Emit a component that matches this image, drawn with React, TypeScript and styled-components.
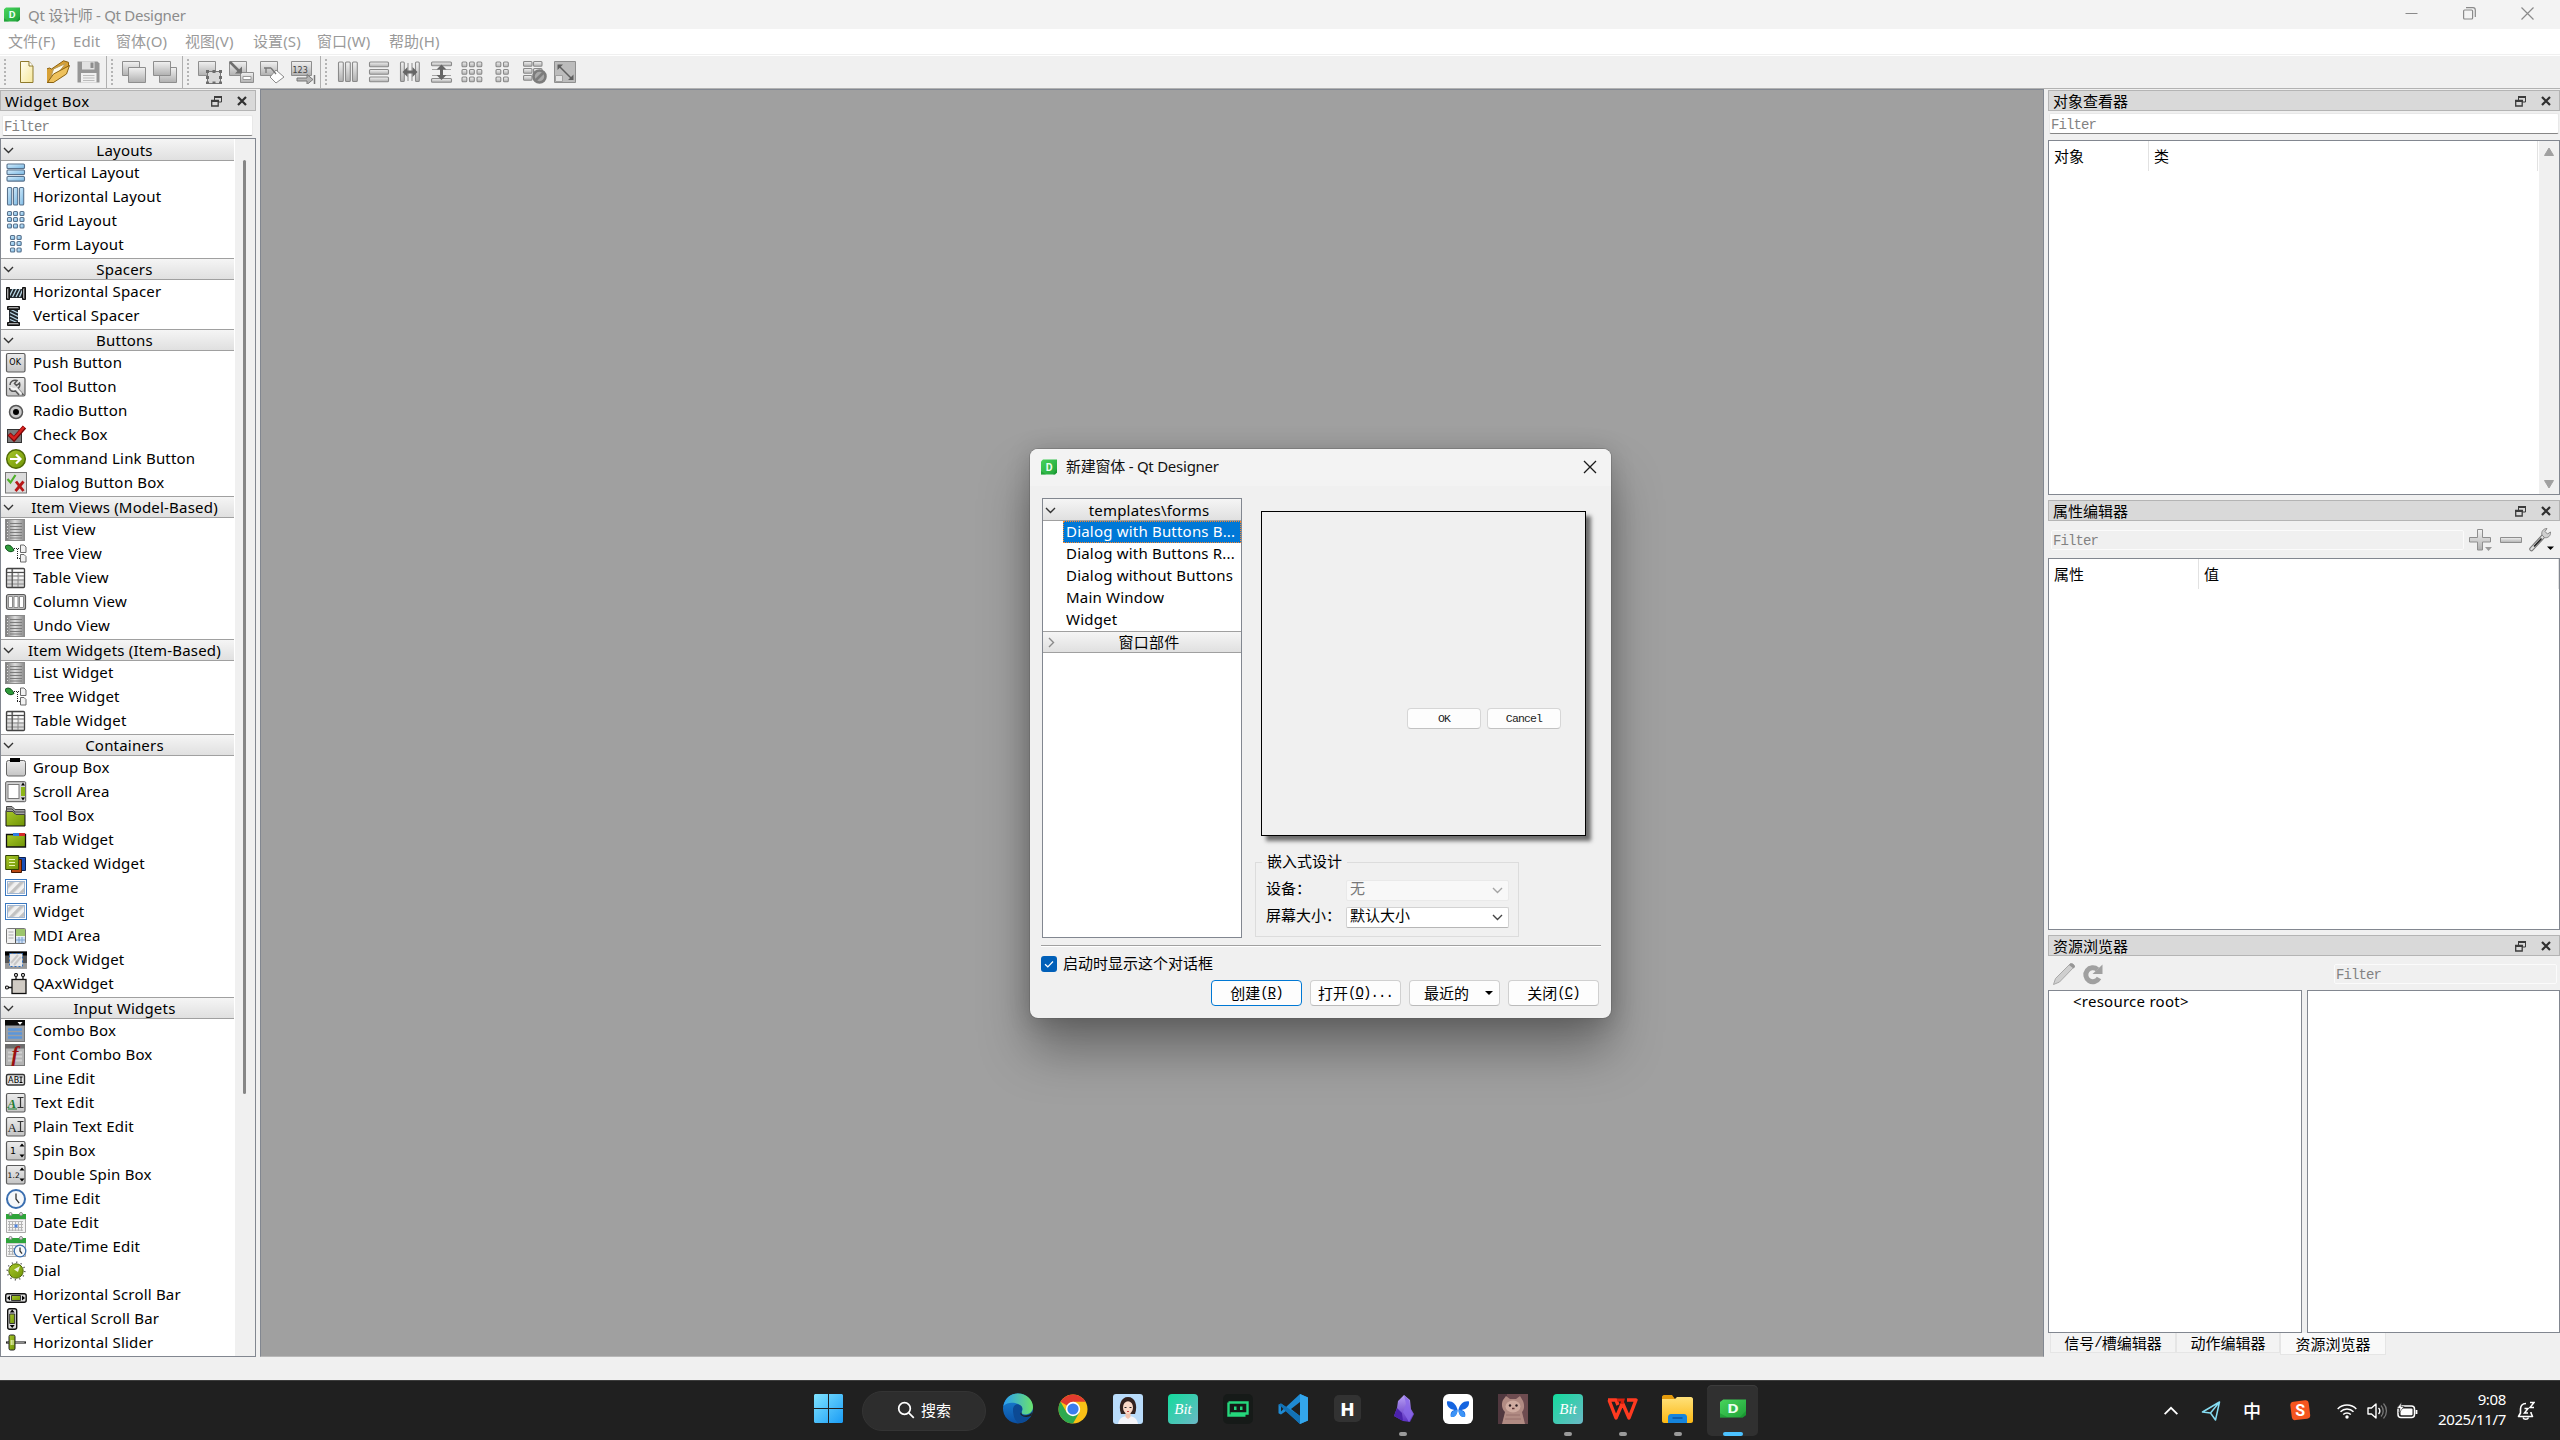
import React from "react";
import styled, { createGlobalStyle, css } from "styled-components";

const UI = `"Noto Sans", "Noto Sans CJK SC", sans-serif`;
const SONG = `"Liberation Mono", "Noto Sans CJK SC", monospace`;

const Global = createGlobalStyle`
  * { box-sizing: border-box; }
  html, body { margin: 0; padding: 0; overflow: hidden; }
  body { font-family: ${UI}; font-size: 15px; color: #000; background: #f0f0f0; }
  svg { display: block; flex: none; }
`;

/* ---------- window frame ---------- */

const Desktop = styled.div`
  position: relative;
  width: 2560px;
  height: 1440px;
  display: flex;
  flex-direction: column;
  overflow: hidden;
  background: #f0f0f0;
  white-space: nowrap;
`;

const TitleBar = styled.header`
  height: 29px;
  flex: none;
  display: flex;
  align-items: center;
  justify-content: space-between;
  padding: 0 26px 1px 4px;
  background: #f3f3f3;
  color: #8c8c8c;
`;

const TitleText = styled.div<{ $dark?: boolean }>`
  display: flex;
  align-items: center;
  gap: ${(p) => (p.$dark ? 9 : 8)}px;
  letter-spacing: ${(p) => (p.$dark ? -0.25 : -0.28)}px;
  color: ${(p) => (p.$dark ? "#111" : "#8c8c8c")};
`;

const Raised = styled.span`
  padding-bottom: 2px;
`;

const WindowButtons = styled.div`
  display: flex;
  align-items: center;
  gap: 45px;
  padding-bottom: 1px;
  color: #8a8a8a;
`;

const MenuBar = styled.nav`
  height: 27px;
  flex: none;
  background: #fff;
  border-bottom: 1px solid #fff;
  box-shadow: inset 0 -1px #f0f0f0;
  display: flex;
  align-items: center;
  padding: 0 0 3px 8px;
  color: #9a9a9a;
`;

const MenuItem = styled.span<{ $w: number }>`
  width: ${(p) => p.$w}px;
  letter-spacing: 0.1px;
`;

const ToolBarRow = styled.div`
  height: 33px;
  flex: none;
  display: flex;
  align-items: center;
  border-bottom: 1px solid #b2b2b2;
`;

const ToolGroup = styled.div<{ $w: number; $lead: number }>`
  width: ${(p) => p.$w}px;
  height: 32px;
  display: flex;
  align-items: center;
  padding-left: 4px;
  border-right: 1px solid #b0b0b0;
  &:last-child { border-right: 0; }
  > i { margin-right: ${(p) => p.$lead}px; }
`;

const Grip = styled.i`
  width: 2px;
  height: 26px;
  background: repeating-linear-gradient(#b4b4b4 0 2px, transparent 2px 4px);
`;

const ToolButton = styled.span`
  width: 31px;
  height: 24px;
  display: flex;
  padding-left: 2px;
`;

const Main = styled.main`
  height: 1268px;
  flex: none;
  display: flex;
  align-items: stretch;
`;

const MdiArea = styled.section`
  flex: 1;
  margin: 0 4px;
  background: #a0a0a0;
  border: 1px solid #828790;
  border-bottom-color: #b8b8b8;
`;

const StatusBar = styled.footer`
  height: 23px;
  flex: none;
`;

/* ---------- docks ---------- */

const Dock = styled.aside<{ $w: number }>`
  width: ${(p) => p.$w}px;
  flex: none;
  display: flex;
  flex-direction: column;
  padding-top: 1px;
`;

const DockTitleBar = styled.div<{ $right?: boolean }>`
  height: 21px;
  flex: none;
  display: flex;
  align-items: center;
  justify-content: space-between;
  padding: 0 8px 0 4px;
  background: #d9d9d9;
  border: 1px solid #b4b4b4;
  letter-spacing: 0.4px;
  ${(p) => p.$right && css`letter-spacing: 0;`}
`;

const DockButtons = styled.span<{ $gap: number }>`
  display: flex;
  align-items: center;
  gap: ${(p) => p.$gap}px;
`;

const Latin = styled.span`
  font-family: ${SONG};
  font-size: 14px;
  letter-spacing: -0.9px;
`;

const FilterBox = styled.div<{ $m: string; $h?: number; $off?: boolean; $w?: number }>`
  height: ${(p) => p.$h ?? 21}px;
  ${(p) => p.$w && css`width: ${p.$w}px;`}
  flex: none;
  margin: ${(p) => p.$m};
  padding: 2px 0 0 1px;
  display: flex;
  align-items: center;
  color: #828282;
  background: ${(p) => (p.$off ? "#f0f0f0" : "#fff")};
  border: 1px solid ${(p) => (p.$off ? "#fbfbfb" : "#e8e8e8")};
  ${(p) => !p.$off && css`border-bottom-color: #868686;`}
  border-radius: 2px;
`;

const Frame = styled.div<{ $h?: number; $w?: number }>`
  ${(p) => (p.$h ? css`height: ${p.$h}px;` : css`flex: 1;`)}
  ${(p) => p.$w && css`width: ${p.$w}px; flex: none;`}
  display: flex;
  background: #fff;
  border: 1px solid #828790;
  overflow: hidden;
`;

const Categories = styled.div`
  width: 233px;
  flex: none;
`;

const Category = styled.div<{ $first?: boolean; $flush?: boolean }>`
  height: 22px;
  margin-top: ${(p) => (p.$first || p.$flush ? 0 : 1)}px;
  border-bottom: 1px solid #a0a0a0;
  border-top: ${(p) => (p.$first ? "0" : "1px solid #a0a0a0")};
  padding-top: ${(p) => (p.$first ? 2 : 0)}px;
  background: linear-gradient(#f5f5f5, #e0e0e0);
  display: grid;
  grid-template-columns: 13px 1fr;
  align-items: center;
  padding-left: 2px;
  text-align: center;
  letter-spacing: 0.2px;
  line-height: 19px;
`;

const CategoryName = styled.span`
  padding-right: 1px;
`;

const WidgetRow = styled.div`
  height: 24px;
  display: flex;
  align-items: center;
  gap: 6px;
  padding-left: 4px;
  line-height: 22px;
  letter-spacing: 0.2px;
`;

const ThumbTrack = styled.div`
  flex: 1;
  background: #f0f0f0;
  margin-left: 1px;
  padding: 21px 0 0 8px;
`;

const Thumb = styled.div`
  width: 3px;
  height: 934px;
  border-radius: 2px;
  background: #868686;
`;

const HeaderRow = styled.div`
  flex: 1;
  height: 30px;
  display: flex;
  align-items: center;
`;

const HeaderCell = styled.div<{ $w: number }>`
  width: ${(p) => p.$w}px;
  height: 30px;
  line-height: 31px;
  padding-left: 5px;
  border-right: 1px solid #e2e2e2;
`;

const ArrowTrack = styled.div`
  width: 20px;
  display: flex;
  flex-direction: column;
  align-items: center;
  justify-content: space-between;
  padding: 7px 0 6px;
  background: #f0f0f0;
`;

const PropertyTools = styled.div`
  height: 37px;
  display: flex;
  align-items: center;
  padding: 0 0 0 3px;
`;

const ResourceTools = styled.div`
  height: 34px;
  display: flex;
  align-items: center;
  padding: 2px 0 0 4px;
`;

const Gap = styled.i<{ $s: number }>`
  flex: none;
  width: ${(p) => p.$s}px;
  height: ${(p) => p.$s}px;
`;

const Panes = styled.div`
  height: 343px;
  display: flex;
  gap: 5px;
`;

const RootItem = styled.span`
  padding: 0 0 0 24px;
  line-height: 20px;
  letter-spacing: 0.25px;
`;

const TabStrip = styled.div`
  display: flex;
  align-items: flex-start;
  padding-left: 2px;
  font: 400 15px ${SONG};
`;

const Tab = styled.div<{ $w: number; $on?: boolean }>`
  width: ${(p) => p.$w}px;
  height: ${(p) => (p.$on ? 22 : 20)}px;
  display: flex;
  align-items: center;
  justify-content: center;
  background: ${(p) => (p.$on ? "#f9f9f9" : "#f3f3f3")};
  border: 1px solid #e5e5e5;
  border-top: 0;
`;

/* ---------- new form dialog ---------- */

const Dialog = styled.section`
  position: absolute;
  left: 1030px;
  top: 449px;
  width: 581px;
  height: 569px;
  border-radius: 8px;
  background: #f0f0f0;
  box-shadow: 0 0 0 1px rgba(90, 90, 90, 0.35), 0 32px 50px rgba(0, 0, 0, 0.34), 0 3px 24px rgba(0, 0, 0, 0.18);
  display: flex;
  flex-direction: column;
`;

const DialogTitle = styled.header`
  height: 37px;
  flex: none;
  display: flex;
  align-items: center;
  justify-content: space-between;
  padding: 0 14px 2px 11px;
  border-radius: 8px 8px 0 0;
  background: #f3f3f3;
`;

const DialogTop = styled.div`
  height: 459px;
  flex: none;
  display: flex;
  gap: 13px;
  padding: 12px 12px 0;
`;

const TemplateList = styled.div`
  width: 200px;
  height: 440px;
  background: #fff;
  border: 1px solid #828790;
`;

const TemplateRow = styled.div<{ $on?: boolean }>`
  height: 22px;
  margin-left: 20px;
  padding-left: 2px;
  line-height: 18px;
  letter-spacing: 0.2px;
  border: 1px solid transparent;
  ${(p) => p.$on && css`
    color: #fff;
    background: #0078d7;
    border: 1px dotted #ff8728;
  `}
`;

const DialogRight = styled.div`
  width: 331px;
  padding-top: 13px;
`;

const Preview = styled.div`
  width: 325px;
  height: 325px;
  margin-left: 6px;
  padding: 196px 24px 0 0;
  border: 1px solid #000;
  box-shadow: 5px 5px 4px rgba(0, 0, 0, 0.55);
  background: #f0f0f0;
  display: flex;
  justify-content: flex-end;
  align-items: flex-start;
  gap: 6px;
`;

const PreviewButton = styled.span`
  width: 74px;
  height: 21px;
  display: flex;
  align-items: center;
  justify-content: center;
  background: #fdfdfd;
  border: 1px solid #d6d6d6;
  border-bottom-color: #c2c2c2;
  border-radius: 4px;
  font-family: "Liberation Mono", monospace;
  font-size: 11.5px;
  letter-spacing: -0.85px;
  color: #222;
`;

const GroupBox = styled.fieldset`
  width: 264px;
  height: 83px;
  margin: 18px 0 0;
  padding: 10px 0 0 10px;
  border: 1px solid #dcdcdc;
  font: 400 15px ${SONG};
  legend {
    height: 16px;
    line-height: 19px;
    margin-left: -4px;
    padding: 0 5px;
  }
`;

const Form = styled.div`
  display: grid;
  grid-template-columns: 80px 163px;
  grid-auto-rows: 21px;
  row-gap: 6px;
  align-items: center;
`;

const FieldLabel = styled.span`
  line-height: 21px;
`;

const Combo = styled.div<{ $off?: boolean }>`
  height: 21px;
  line-height: 20px;
  display: flex;
  align-items: center;
  justify-content: space-between;
  padding: 0 5px 0 3px;
  background: ${(p) => (p.$off ? "#f8f8f8" : "#fff")};
  border: 1px solid ${(p) => (p.$off ? "#e9e9e9" : "#d2d2d2")};
  ${(p) => !p.$off && css`border-bottom-color: #b6b6b6;`}
  border-radius: 2px;
  color: ${(p) => (p.$off ? "#787878" : "#000")};
`;

const Rule = styled.hr`
  width: 560px;
  height: 2px;
  flex: none;
  margin: 0 0 0 11px;
  border: 0;
  border-top: 1px solid #a0a0a0;
  background: #fff;
`;

const CheckRow = styled.label`
  height: 17px;
  flex: none;
  margin: 8px 0 0 11px;
  display: flex;
  align-items: center;
  gap: 6px;
  font: 400 15px ${SONG};
`;

const DialogButtons = styled.div`
  display: flex;
  justify-content: flex-end;
  gap: 8px;
  padding: 8px 12px 0 0;
`;

const PushButton = styled.button<{ $primary?: boolean }>`
  width: 91px;
  height: 26px;
  padding: 0 0 1px;
  display: flex;
  align-items: center;
  justify-content: center;
  background: #fdfdfd;
  border: 1px solid ${(p) => (p.$primary ? "#0078d4" : "#d0d0d0")};
  ${(p) => !p.$primary && css`border-bottom-color: #bababa;`}
  border-radius: 4px;
  color: #000;
  font: 400 15px ${SONG};
`;

/* ---------- task bar ---------- */

const TaskBar = styled.footer`
  height: 60px;
  flex: none;
  display: flex;
  align-items: stretch;
  justify-content: space-between;
  background: #202020;
  border-top: 1px solid #3d3d3d;
  padding-left: 801px;
  color: #fff;
`;

const TaskItems = styled.div`
  display: flex;
  align-items: center;
`;

const TaskItem = styled.div<{ $active?: boolean }>`
  width: 51px;
  height: 51px;
  margin: 0 2px;
  border-radius: 5px;
  display: grid;
  grid-template-rows: 47px 4px;
  align-items: center;
  justify-items: center;
  padding-bottom: 1px;
  ${(p) => p.$active && css`background: #303030; box-shadow: inset 0 1px #3c3c3c;`}
`;

const RunMark = styled.i<{ $active?: boolean }>`
  width: ${(p) => (p.$active ? 20 : 8)}px;
  height: 4px;
  border-radius: 2px;
  background: ${(p) => (p.$active ? "#4cc2ff" : "#9a9a9a")};
`;

const Search = styled.div`
  width: 124px;
  height: 40px;
  margin: 0 4px 0 6px;
  padding: 0 0 1px 0;
  border-radius: 20px;
  border: 1px solid #343434;
  background: #2d2d2d;
  display: flex;
  align-items: center;
  justify-content: center;
  gap: 6px;
`;

const Tray = styled.div`
  display: flex;
  align-items: center;
  padding-right: 25px;
`;

const Ime = styled.span`
  width: 20px;
  margin: 0 27px 2px 22px;
  font: 500 18px "Noto Sans CJK SC", sans-serif;
`;

const Clock = styled.time`
  width: 70px;
  margin: 0 11px 3px 18px;
  text-align: right;
  line-height: 20px;
  letter-spacing: -0.35px;
`;

/* ---------- icons ---------- */

const HiddenSvg = styled.svg`
  position: absolute;
  width: 0;
  height: 0;
`;

const Defs = () => (
  <HiddenSvg>
    <defs>
      <linearGradient id="steel" x2="0" y2="1"><stop stopColor="#f2f2f2" /><stop offset="1" stopColor="#b0b0b0" /></linearGradient>
      <linearGradient id="steelD" x2="1" y2="0"><stop stopColor="#777" /><stop offset=".5" stopColor="#dcdcdc" /><stop offset="1" stopColor="#8a8a8a" /></linearGradient>
      <linearGradient id="sky" x2="1" y2="1"><stop stopColor="#d8effd" /><stop offset="1" stopColor="#74b5e2" /></linearGradient>
      <linearGradient id="lime" x2="1" y2="1"><stop stopColor="#a9c92a" /><stop offset="1" stopColor="#6f9306" /></linearGradient>
      <linearGradient id="grey" x2="0" y2="1"><stop stopColor="#ececec" /><stop offset="1" stopColor="#c4c4c4" /></linearGradient>
      <linearGradient id="win" x2="1" y2="1"><stop stopColor="#7fe3ff" /><stop offset="1" stopColor="#1a9cf5" /></linearGradient>
      <linearGradient id="qt" x2="1" y2="1"><stop stopColor="#47d45c" /><stop offset="1" stopColor="#1fa238" /></linearGradient>
      <linearGradient id="bit" x2="1" y2="1"><stop stopColor="#12dc9c" /><stop offset="1" stopColor="#6cb8c6" /></linearGradient>
      <linearGradient id="edgeA" x2="1" y2="0"><stop stopColor="#2a9df4" /><stop offset="1" stopColor="#6be36c" /></linearGradient>
      <linearGradient id="edgeB" x2="0" y2="1"><stop stopColor="#1b86d8" /><stop offset="1" stopColor="#0a4fa3" /></linearGradient>
      <linearGradient id="paper" x2="1" y2="1"><stop stopColor="#fffef2" /><stop offset="1" stopColor="#f6e79a" /></linearGradient>
      <linearGradient id="gold" x2="0" y2="1"><stop stopColor="#ffe17a" /><stop offset="1" stopColor="#fcb813" /></linearGradient>
      <linearGradient id="gem" x2="0" y2="1"><stop stopColor="#b9a0f5" /><stop offset="1" stopColor="#5a2fc0" /></linearGradient>
      <pattern id="hatch" width="7" height="7" patternUnits="userSpaceOnUse" patternTransform="rotate(45)"><rect width="7" height="7" fill="#f1f1f1" /><rect width="3.4" height="7" fill="#c2c2c2" /></pattern>
    </defs>
  </HiddenSvg>
);

const Cells = ({ xs, ys, w, h, fill = "url(#sky)", stroke = "#58728d" }: { xs: number[]; ys: number[]; w: number; h: number; fill?: string; stroke?: string }) => (
  <g fill={fill} stroke={stroke} strokeWidth="1.1">
    {xs.map((x) => ys.map((y) => <rect key={`${x}-${y}`} x={x} y={y} width={w} height={h} rx="1" />))}
  </g>
);

const Spring = () => (
  <g>
    <path d="M5 8h12v9H5z" fill="#20262b" />
    <path d="M4 16l4-8M7.5 16l4-8M11 16l4-8M14.500 16l3-7" stroke="#b9d7e6" strokeWidth="1.3" />
    <path d="M1.500 6.500h3v12h-3zM17.500 6.500h3v12h-3z" fill="#4a4a4a" stroke="#111" />
    <path d="M2.500 8v9M18.500 8v9" stroke="#a8a8a8" />
  </g>
);

const ListPic = () => (
  <g>
    <rect x=".5" y=".5" width="19" height="21" fill="url(#steelD)" stroke="#8b8b8b" />
    <path d="M5 4.500h12M5 7.500h12M5 10.500h12M5 13.500h12M5 16.500h12M5 19h12" stroke="#7b7b7b" />
    <path d="M2.500 3v16" stroke="#ddd" strokeDasharray="1 2" />
  </g>
);

const TreePic = () => (
  <g>
    <path d="M0 3.500c3-3 7-1 9 4c-4 3-8 0-9-4z" fill="#2f9b3a" stroke="#0d4d18" />
    <path d="M9 5.500h6M12.500 6v10M12 15.500h3" stroke="#222" strokeDasharray="1 1" />
    <path d="M15.500 2h3.500l2 2v5.500h-5.500zM15.500 11.500h3.500l2 2v5.500h-5.500z" fill="#f2f2f2" stroke="#6a6a6a" />
  </g>
);

const TablePic = () => (
  <g>
    <rect x="1.500" y="1.500" width="18" height="19" rx="1" fill="#d9d9d9" stroke="#444" strokeWidth="1.300" />
    <path d="M2 9h17M2 13h17M2 17h17M13 6v14" stroke="#888" />
    <path d="M3 3.500h3M8.500 3.500h10M3 7.300h3M8.500 7.300h4M14.500 7.300h4M8.500 11h4M14.500 11h4" stroke="#fff" strokeWidth="1.500" />
    <path d="M7.200 2v18M2 5.500h17" stroke="#4c4c4c" strokeWidth="1.200" />
  </g>
);

const Plate = ({ children }: { children?: React.ReactNode }) => (
  <g>
    <rect x="1.500" y="1.500" width="18.500" height="18.500" rx="1.500" fill="url(#grey)" stroke="#5c5c5c" strokeWidth="1.200" />
    {children}
  </g>
);

const HatchPic = () => (
  <g>
    <rect x=".5" y="2.500" width="21" height="16" fill="#fff" stroke="#3a78c0" />
    <rect x="2.500" y="4.500" width="17" height="12" fill="url(#hatch)" stroke="#9fb6d2" />
  </g>
);

const CalendarPic = () => (
  <g>
    <path d="M1.500 7h19v13.500h-19z" fill="#f4f4f4" stroke="#a9a9a9" />
    <path d="M1 2h20v5H1z" fill="#2fa43a" />
    <circle cx="5.500" cy="2" r="1.500" fill="#e4e4e4" stroke="#888" /><circle cx="16" cy="2" r="1.500" fill="#e4e4e4" stroke="#888" />
    <path d="M3 9.500h15M3 12.500h15M3 15.500h15M3 18.200h15M4.500 9v10M7.500 9v10M10.500 9v10M13.500 9v10M16.500 9v10" stroke="#b5b5b5" />
  </g>
);

const ClockFace = ({ x, y, r }: { x: number; y: number; r: number }) => (
  <g>
    <circle cx={x} cy={y} r={r} fill="#f6f8fa" stroke="#3b6fb0" strokeWidth={r / 4.5} />
    <path d={`M${x} ${y - r * 0.6}V${y}l${r * 0.35} ${r * 0.45}`} fill="none" stroke="#333" strokeWidth="1.300" />
  </g>
);

const PICTURES: Record<string, React.ReactNode> = {
  "Vertical Layout": <Cells xs={[2]} ys={[2, 8, 14.5]} w={17.5} h={4.6} />,
  "Horizontal Layout": <Cells xs={[2.5, 8.5, 14.5]} ys={[1.5]} w={4.2} h={17.5} />,
  "Grid Layout": <Cells xs={[2.5, 8.5, 15]} ys={[1.5, 7.5, 14]} w={4} h={4} />,
  "Form Layout": <Cells xs={[5.5, 12]} ys={[1.5, 7.5, 14]} w={4.2} h={4} />,
  "Horizontal Spacer": <Spring />,
  "Vertical Spacer": <g transform="rotate(90 11 11) translate(0 1)"><Spring /></g>,
  "Push Button": <Plate><text x="4.200" y="13" fontSize="8" fontFamily="DejaVu Sans">OK</text></Plate>,
  "Tool Button": <Plate><path d="M5 9c0-4 4-5.500 7-4.500l-2.500 3 2 2 3-2.500c1 3-.5 5-2 5.500l6 6.500" fill="none" stroke="#555" strokeWidth="1.500" /><path d="M4.500 12c0 3 3.500 4 6 3l3.500 4" fill="none" stroke="#555" strokeWidth="1.400" /><path d="M6 11c1 3 4 2 5.500 1.500l5 5.500" fill="none" stroke="#f4f4f4" strokeWidth="2" /></Plate>,
  "Radio Button": <g><circle cx="11" cy="12" r="6.500" fill="#c9c9c9" stroke="#555" strokeWidth="1.500" /><circle cx="11" cy="12" r="3" /></g>,
  "Check Box": <g><rect x="2.500" y="5.500" width="14" height="13" fill="#7c7c7c" stroke="#333" /><path d="M4 10l5 5 10.500-12" fill="none" stroke="#7d0707" strokeWidth="4.500" /><path d="M4.500 10.500l4.500 4L19 3" fill="none" stroke="#d8221f" strokeWidth="2.600" /></g>,
  "Command Link Button": <g><circle cx="11" cy="11" r="9.300" fill="url(#lime)" stroke="#4f6a06" strokeWidth="1.500" /><path d="M5 11h10M11 6.500l4.500 4.500-4.500 4.500" fill="none" stroke="#fff" strokeWidth="2.200" /></g>,
  "Dialog Button Box": <g><rect x=".5" y=".5" width="21" height="20.500" fill="#dcdcdc" stroke="#777" /><path d="M2.500 7l3 3.500 5-7.500" fill="none" stroke="#4fb02a" strokeWidth="2.200" /><path d="M11 9.500l7.500 9.500M18.500 9.500L10.500 19" stroke="#b81818" strokeWidth="2.800" /></g>,
  "List View": <ListPic />, "Undo View": <ListPic />, "List Widget": <ListPic />,
  "Tree View": <TreePic />, "Tree Widget": <TreePic />,
  "Table View": <TablePic />, "Table Widget": <TablePic />,
  "Column View": <g><rect x="1.500" y="3.500" width="19" height="15" rx="2" fill="#bdbdbd" stroke="#5a5a5a" strokeWidth="1.200" /><path d="M3.500 5.500h4v11h-4zM9 5.500h4v11H9zM14.500 5.500h4v11h-4z" fill="#fff" stroke="#8a8a8a" /></g>,
  "Group Box": <g><rect x="1.500" y="3.500" width="19" height="15.500" rx="2" fill="url(#grey)" stroke="#666" /><path d="M5 1h10v4H5z" /></g>,
  "Scroll Area": <g><rect x=".7" y=".7" width="20" height="20" rx="1" fill="#d4d4d4" stroke="#555" /><rect x="3" y="3.500" width="11" height="14" fill="#fff" stroke="#777" /><path d="M16 6h4v9h-4z" fill="#8db516" /><path d="M18 1.500l2 3h-4zM18 19.500l2-3h-4z" /></g>,
  "Tool Box": <g><path d="M1 5.500l7 1 3 3h9V21H1z" fill="url(#lime)" stroke="#111" /><path d="M1.500 1.500H7l3 3h10v5h-9l-3-3H1.500z" fill="#a4a4a4" stroke="#444" /><path d="M1.500 4H7l3 3h10" fill="none" stroke="#444" /></g>,
  "Tab Widget": <g><path d="M1.500 5.500h19V18h-19z" fill="url(#lime)" stroke="#111" strokeWidth="1.300" /><path d="M8 4h6v3H8z" fill="#2e7de0" /><path d="M14 4h6v3h-6z" fill="#d42a2a" /></g>,
  "Stacked Widget": <g><path d="M12.500 4.500h8v13h-8z" fill="#1a4fb8" stroke="#0b1f50" /><path d="M6.500 6.500h10v13h-10z" fill="#b94712" stroke="#471800" /><path d="M.7 2.500h13v14H.7z" fill="url(#lime)" stroke="#2e3f05" /><path d="M4 6.500h6M4 9.500h6M4 12.500h6" stroke="#eaf5b0" /></g>,
  "Frame": <HatchPic />, "Widget": <HatchPic />,
  "MDI Area": <g><rect x="1.500" y="3.500" width="19" height="15" rx="1" fill="#f1f1f1" stroke="#777" /><path d="M11 4h9v7h-9z" fill="#9cc56b" /><path d="M11 12h9v6h-9z" fill="#cfe0f5" /><path d="M11 15h9M14 12v6M17 12v6" stroke="#7da2d0" /><path d="M3.500 7h5M3.500 10h5M3.500 13h5" stroke="#aaa" /><path d="M10.500 4v14" stroke="#555" /></g>,
  "Dock Widget": <g><path d="M0 2.500h22v17H0z" fill="#555" /><path d="M0 2.500h22v4H0z" fill="#000" /><path d="M0 14h22v5.500H0z" fill="#999" /><rect x="4.500" y="4.500" width="13" height="13" fill="#e9e9e9" stroke="#2f6fc0" strokeDasharray="2 2" /><path d="M6 14l7-8M9 16l7-8" stroke="#c8c8c8" strokeWidth="2" /></g>,
  "QAxWidget": <g><rect x="7" y="6.500" width="14" height="14" fill="#d0cbc4" stroke="#111" strokeWidth="1.300" /><path d="M11 6V3M18 6V3M7 14.500H3" stroke="#111" strokeWidth="1.300" /><g fill="#fff" stroke="#111" strokeWidth="1.200"><circle cx="11" cy="2" r="1.500" /><circle cx="18" cy="2" r="1.500" /><circle cx="2" cy="14.500" r="1.500" /></g></g>,
  "Combo Box": <g><rect x=".5" y=".5" width="19" height="21" fill="#9a9fa5" stroke="#777" /><path d="M0 0h20v5.500H0z" fill="#0a0a0a" /><path d="M12.500 2h5L15 5z" fill="#fff" /><path d="M3 9.500h14M3 13.500h14M3 17.500h14" stroke="#5c96da" strokeWidth="2.600" /></g>,
  "Font Combo Box": <g><rect x=".5" y=".5" width="19" height="21" fill="#b4b4b4" stroke="#777" /><path d="M0 0h20v4.500H0z" fill="#6d6d6d" /><path d="M3 8.500h14M3 12.500h14M3 16.500h14" stroke="#d0d0d0" strokeWidth="2" /><text x="10" y="17" fontSize="21" fontStyle="italic" fontWeight="bold" fontFamily="'Liberation Serif', serif" textAnchor="middle" fill="#9b1111">f</text></g>,
  "Line Edit": <g><rect x="1.500" y="6.500" width="18" height="10.500" rx="1.500" fill="#e6e6e6" stroke="#333" strokeWidth="1.400" /><text x="3" y="14.800" fontSize="8" fontFamily="DejaVu Sans">AB</text><path d="M14.500 9h3M14.500 14.500h3M16 9v5.500" stroke="#000" /></g>,
  "Text Edit": <Plate><text x="2.500" y="15.500" fontSize="13" fontFamily="Liberation Serif" fontStyle="italic" fill="#1d7a2f" fontWeight="bold">A</text><path d="M3 17h9" stroke="#1d7a2f" /><path d="M12.500 5.500h6M12.500 15.500h6M15.500 5.500v10" stroke="#333" strokeWidth="1.200" /></Plate>,
  "Plain Text Edit": <Plate><text x="2.500" y="15.500" fontSize="13" fontFamily="Liberation Serif" fill="#222">A</text><path d="M12.500 5.500h6M12.500 15.500h6M15.500 5.500v10" stroke="#333" strokeWidth="1.200" /></Plate>,
  "Spin Box": <Plate><text x="5" y="14" fontSize="9.500" fontFamily="DejaVu Sans">1</text><path d="M17 3.500l2.500 3h-5zM17 17.500l2.500-3h-5z" /></Plate>,
  "Double Spin Box": <Plate><text x="2.500" y="14" fontSize="7.500" fontFamily="DejaVu Sans">1.2</text><path d="M17 3.500l2.500 3h-5zM17 17.500l2.500-3h-5z" /></Plate>,
  "Time Edit": <ClockFace x={11} y={11} r={9} />,
  "Date Edit": <g><CalendarPic /><path d="M9.500 12.500h3v3h-3z" fill="#4d84e0" /></g>,
  "Date/Time Edit": <g><CalendarPic /><ClockFace x={15} y={15} r={5.8} /></g>,
  "Dial": <g><circle cx="11" cy="11" r="8.800" fill="none" stroke="#555" strokeWidth="1.400" strokeDasharray="1.200 3.400" /><circle cx="11" cy="11" r="7.200" fill="url(#lime)" stroke="#4f6a06" /><path d="M15 6l-2 6-4-2.500z" fill="#fff" opacity=".85" /></g>,
  "Horizontal Scroll Bar": <g><rect x=".7" y="9.700" width="20.500" height="8.600" rx="2" fill="#ddd" stroke="#111" strokeWidth="1.400" /><path d="M6.500 11.500h9v5h-9z" fill="url(#lime)" stroke="#333" /><path d="M2 14l3-2.500v5zM20 14l-3-2.500v5z" /></g>,
  "Vertical Scroll Bar": <g><rect x="2.700" y=".7" width="9" height="20.500" rx="2" fill="#ddd" stroke="#111" strokeWidth="1.400" /><path d="M4.700 6h5v9.500h-5z" fill="url(#lime)" stroke="#333" /><path d="M7.200 1.500l2.500 3h-5zM7.200 20l2.500-3h-5z" /></g>,
  "Horizontal Slider": <g><path d="M1 10.500h20" stroke="#222" strokeWidth="2.200" /><path d="M2.500 10.500h17" stroke="#aaa" strokeWidth=".8" /><rect x="4" y="3" width="6" height="15" rx="1.500" fill="url(#lime)" stroke="#222" /><path d="M6.200 8v5M8 8v5" stroke="#f4fbd0" /></g>,
};

const WidgetIcon = ({ name }: { name: string }) => (
  <svg width="22" height="22" viewBox="0 0 22 22">{PICTURES[name]}</svg>
);

const T = ({ children }: { children?: React.ReactNode }) => (
  <ToolButton><svg width="25" height="24" viewBox="0 0 25 24">{children}</svg></ToolButton>
);

const G = { fill: "url(#steel)", stroke: "#8e8e8e" };

const FileTools = () => (
  <>
    <T><path d="M4.500 1.500h8.500l4 4.500v16.500H4.500z" fill="url(#paper)" stroke="#8f7a2c" /><path d="M13 1.500V6h4" fill="#fff" stroke="#8f7a2c" /></T>
    <T><g transform="translate(-1.500 0)"><path d="M1 9l3-1 2 1L18 .8l5 1.500V6L8 22.500H1z" fill="#d8a136" stroke="#8a6212" /><path d="M5 18l3-9L20 3.500 9 18z" fill="#fdfbef" stroke="#b89a55" /><path d="M2 22.500L8 14 24 5.500 21 14 8 22.500z" fill="#eec15c" stroke="#8a6212" /></g></T>
    <T><path d="M.5 1.500h20l2 2v19H.5z" fill="#969696" /><path d="M5 1.500h12.500v8H5z" fill="#e2e2e2" /><path d="M13.500 2.500h3v5.500h-3z" fill="#8d8d8d" /><path d="M4 13h15.500v9.500H4z" fill="#f0f0f0" /><path d="M6 15.500h11.500M6 18h11.500M6 20.500h11.500" stroke="#bbb" /></T>
  </>
);

const OrderTools = () => (
  <>
    <T><path {...G} d="M1.500 1.500h17v14h-17z" /><path {...G} d="M7.500 7.500h17v15h-17z" /></T>
    <T><path {...G} d="M7.500 7.500h17v15h-17z" /><path {...G} d="M1.500 1.500h17v14h-17z" /></T>
  </>
);

const EditTools = () => (
  <>
    <T><path {...G} d="M.5 1.500h17v14H.5z" /><path d="M9.500 11.500h13v12h-13z" fill="#d8d8d8" stroke="#777" /><path d="M8 10h3v3H8zM14.500 10h3v3h-3zM21 10h3v3h-3zM8 16h3v3H8zM21 16h3v3h-3zM8 21.500h3v3H8zM14.500 21.500h3v3h-3zM21 21.500h3v3h-3z" fill="#6c6c6c" /></T>
    <T><path {...G} d="M.5 1.500h17v14H.5z" /><path {...G} d="M11.500 12.500h13v10h-13z" /><path d="M14 16.500h8v3h-8z" fill="#fff" stroke="#999" /><path d="M1 2l9 9" stroke="#6e6e6e" strokeWidth="2.500" /><path d="M13 13.500V6.500L6 13.500z" fill="#6e6e6e" /></T>
    <T><path {...G} d="M.5 1.500h17v14H.5z" /><path d="M16 10l8 7-8 6-6-6z" fill="#fff" stroke="#8a8a8a" /><path d="M4 8h7M6 8v5M11 8l5 6" fill="none" stroke="#777" strokeWidth="1.300" /></T>
    <T><path {...G} d="M.5 1.500h20v14H.5z" /><text x="1.500" y="13" fontSize="8" fontFamily="DejaVu Sans" fill="#444">123</text><path d="M6 18h10v-3.500l6 5-6 5V21H6z" fill="#b4b4b4" stroke="#777" /><path d="M23.500 15v9" stroke="#777" strokeWidth="1.500" /></T>
  </>
);

const STEEL = { fill: "url(#steel)", stroke: "#8a8a8a" };

const LayoutTools = () => (
  <>
    <T><Cells xs={[1.5, 8.5, 15.5]} ys={[2]} w={4.8} h={19.5} {...STEEL} /></T>
    <T><Cells xs={[1.5]} ys={[2, 9.5, 17]} w={19} h={4.8} {...STEEL} /></T>
    <T><Cells xs={[1.5, 16.5]} ys={[2]} w={3.8} h={19.5} {...STEEL} /><path d="M9 3v18M13 3v18" stroke="#8a8a8a" /><path d="M3.500 12l5-5v3.500h5V7l5 5-5 5v-3.500h-5V17z" fill="#666" /></T>
    <T><Cells xs={[1.5]} ys={[2, 18.5]} w={20} h={3.8} {...STEEL} /><path d="M2 9.500h19M2 15.500h19" stroke="#a5a5a5" /><path d="M11.500 4.500l5 5H13v5.500h3.500l-5 5-5-5H10V9.500H6.500z" fill="#666" /></T>
    <T><Cells xs={[1, 8.5, 16]} ys={[2, 9.5, 17]} w={4.8} h={4.8} {...STEEL} /></T>
    <T><Cells xs={[4, 11.5]} ys={[2, 9.5, 17]} w={4.8} h={4.8} {...STEEL} /></T>
    <T><Cells xs={[0.5, 10.5]} ys={[1.5, 8.5, 15.5]} w={8.5} h={4.8} {...STEEL} /><circle cx="16.500" cy="16.500" r="6" fill="#a8a8a8" stroke="#7c7c7c" strokeWidth="2.600" /><path d="M13 20l7-7" stroke="#7c7c7c" strokeWidth="2.600" /></T>
    <T><path d="M.5 1.500h21v21H.5z" fill="#bcbcbc" stroke="#8f8f8f" /><path d="M1.500 15.500h7v6h-7z" fill="#e4e4e4" stroke="#a0a0a0" /><path d="M6 7l11 11" stroke="#5f5f5f" strokeWidth="1.500" /><path d="M3.500 4.500h5.500l-5.500 5.500zM19.500 20h-5.500l5.500-5.500z" fill="#5f5f5f" /></T>
  </>
);

const QtLogo = ({ size = 16, h = size }: { size?: number; h?: number }) => (
  <svg width={size} height={h} viewBox="0 0 16 16" preserveAspectRatio="none">
    <path d="M2 .5h14v13l-2 2H0v-13z" fill="url(#qt)" />
    <path d="M0 12l5 3.500H0zM16 10l-4 5.500h2l2-2z" fill="#128a2a" opacity=".5" />
    <text x="8" y="12" fontSize="10.500" fontWeight="bold" fontFamily="Roboto, sans-serif" textAnchor="middle" fill="#eafff0">D</text>
  </svg>
);

const FloatClose = ({ gap }: { gap: number }) => (
  <DockButtons $gap={gap}>
    <svg width="11" height="12" viewBox="0 0 11 12"><path d="M3.500 1.500h7v5.500h-7z" fill="#d9d9d9" stroke="#3c3c3c" /><path d="M3 2h8" stroke="#3c3c3c" strokeWidth="2" /><path d="M.7 5.500h6.500V11H.7z" fill="#d9d9d9" stroke="#3c3c3c" strokeWidth="1.300" /><path d="M0 6h8" stroke="#3c3c3c" strokeWidth="2" /></svg>
    <svg width="10" height="10" viewBox="0 0 10 10"><path d="M1 1l8 8M9 1L1 9" stroke="#303030" strokeWidth="2.200" /></svg>
  </DockButtons>
);

const Chevron = ({ dir = "down", color = "#333", s = 11 }: { dir?: "down" | "right" | "up"; color?: string; s?: number }) => (
  <svg width={s} height={s} viewBox="0 0 11 11">
    <path d={dir === "down" ? "M1 3l4.500 4.500L10 3" : dir === "right" ? "M4 1l4.500 4.500L4 10" : "M.5 8L5.500 3l5 5"} fill="none" stroke={color} strokeWidth="1.400" />
  </svg>
);

const ScrollArrow = ({ up }: { up?: boolean }) => (
  <svg width="10" height="8" viewBox="0 0 10 8"><path d={up ? "M5 0l4.500 7.500h-9z" : "M.5.5h9L5 8z"} fill="#a0a0a0" stroke="#a0a0a0" strokeLinejoin="round" /></svg>
);

/* ---------- panels ---------- */

const GROUPS: [string, string[]][] = [
  ["Layouts", ["Vertical Layout", "Horizontal Layout", "Grid Layout", "Form Layout"]],
  ["Spacers", ["Horizontal Spacer", "Vertical Spacer"]],
  ["Buttons", ["Push Button", "Tool Button", "Radio Button", "Check Box", "Command Link Button", "Dialog Button Box"]],
  ["Item Views (Model-Based)", ["List View", "Tree View", "Table View", "Column View", "Undo View"]],
  ["Item Widgets (Item-Based)", ["List Widget", "Tree Widget", "Table Widget"]],
  ["Containers", ["Group Box", "Scroll Area", "Tool Box", "Tab Widget", "Stacked Widget", "Frame", "Widget", "MDI Area", "Dock Widget", "QAxWidget"]],
  ["Input Widgets", ["Combo Box", "Font Combo Box", "Line Edit", "Text Edit", "Plain Text Edit", "Spin Box", "Double Spin Box", "Time Edit", "Date Edit", "Date/Time Edit", "Dial", "Horizontal Scroll Bar", "Vertical Scroll Bar", "Horizontal Slider"]],
];

const WidgetBox = () => (
  <Dock $w={256}>
    <DockTitleBar>Widget Box<FloatClose gap={15} /></DockTitleBar>
    <FilterBox $m="4px 3px 2px 2px"><Latin>Filter</Latin></FilterBox>
    <Frame>
      <Categories>
        {GROUPS.map(([title, items], i) => (
          <React.Fragment key={title}>
            <Category $first={i === 0}><Chevron /><CategoryName>{title}</CategoryName></Category>
            {items.map((name) => (
              <WidgetRow key={name}><WidgetIcon name={name} /><Raised>{name}</Raised></WidgetRow>
            ))}
          </React.Fragment>
        ))}
      </Categories>
      <ThumbTrack><Thumb /></ThumbTrack>
    </Frame>
  </Dock>
);

const RightDocks = () => (
  <Dock $w={512}>
    <DockTitleBar $right>对象查看器<FloatClose gap={15} /></DockTitleBar>
    <FilterBox $m="2px 1px 6px"><Latin>Filter</Latin></FilterBox>
    <Frame $h={355}>
      <HeaderRow><HeaderCell $w={100}>对象</HeaderCell><HeaderCell $w={389}>类</HeaderCell></HeaderRow>
      <ArrowTrack><ScrollArrow up /><ScrollArrow /></ArrowTrack>
    </Frame>
    <Gap $s={5} />
    <DockTitleBar $right>属性编辑器<FloatClose gap={15} /></DockTitleBar>
    <PropertyTools>
      <FilterBox $m="0 5px 0 0" $h={20} $w={413} $off><Latin>Filter</Latin></FilterBox>
      <svg width="24" height="24" viewBox="0 0 24 24"><path d="M8.500 1.500h5v8h8v4.500h-8v8h-5v-8h-8V9.500h8z" {...G} /><path d="M16 19h7l-3.500 4z" fill="#9a9a9a" /></svg>
      <Gap $s={7} />
      <svg width="22" height="8" viewBox="0 0 22 8"><path d="M.5 1.500h21v5H.5z" {...G} /></svg>
      <Gap $s={7} />
      <svg width="26" height="25" viewBox="0 0 26 25"><path d="M2.500 22L15 8.500" stroke="#777" strokeWidth="4.500" strokeLinecap="round" /><path d="M2.500 22L15 8.500" stroke="#e0e0e0" strokeWidth="2.400" strokeLinecap="round" /><path d="M5 19.500L12.500 11.500" stroke="#222" strokeWidth="1.600" /><path d="M13 8c-1-3 1-6.500 5-6.500l-2 3 2.500 2.500 3-2c.5 4-3 6.500-6 5.500z" fill="#d0d0d0" stroke="#888" /><path d="M18 19.500h7L21.500 23z" /></svg>
    </PropertyTools>
    <Frame $h={372}>
      <HeaderRow><HeaderCell $w={150}>属性</HeaderCell><HeaderCell $w={360}>值</HeaderCell></HeaderRow>
    </Frame>
    <Gap $s={5} />
    <DockTitleBar $right>资源浏览器<FloatClose gap={15} /></DockTitleBar>
    <ResourceTools>
      <svg width="24" height="24" viewBox="0 0 24 24"><path d="M1.500 22.500l2-6L18 2c1.500-1.500 5 1 4 3L7.500 20z" fill="#cfcfcf" stroke="#a8a8a8" /><path d="M17 3l4.500 3.500L23 5c0-2-2.500-4-4.500-3.500z" fill="#969696" /></svg>
      <Gap $s={6} />
      <svg width="21" height="21" viewBox="0 0 21 21"><path d="M15.500 5.500A7 7 0 1 0 17 14" fill="none" stroke="#a0a0a0" strokeWidth="5" /><path d="M20.500 .5v9.500h-10z" fill="#a0a0a0" /></svg>
      <FilterBox $m="0 3px 0 auto" $h={20} $w={223} $off><Latin>Filter</Latin></FilterBox>
    </ResourceTools>
    <Panes>
      <Frame $w={254}><RootItem>&lt;resource root&gt;</RootItem></Frame>
      <Frame />
    </Panes>
    <TabStrip>
      <Tab $w={126}>信号<Latin>/</Latin>槽编辑器</Tab>
      <Tab $w={104}>动作编辑器</Tab>
      <Tab $w={106} $on>资源浏览器</Tab>
    </TabStrip>
  </Dock>
);

const NewForm = () => (
  <Dialog>
    <DialogTitle>
      <TitleText $dark><QtLogo /><Raised>新建窗体 - Qt Designer</Raised></TitleText>
      <svg width="14" height="14" viewBox="0 0 14 14"><path d="M1 1l12 12M13 1L1 13" stroke="#1a1a1a" strokeWidth="1.300" /></svg>
    </DialogTitle>
    <DialogTop>
      <TemplateList>
        <Category $first><Chevron /><CategoryName>templates\forms</CategoryName></Category>
        <TemplateRow $on>Dialog with Buttons B...</TemplateRow>
        <TemplateRow>Dialog with Buttons R...</TemplateRow>
        <TemplateRow>Dialog without Buttons</TemplateRow>
        <TemplateRow>Main Window</TemplateRow>
        <TemplateRow>Widget</TemplateRow>
        <Category $flush><Chevron dir="right" color="#8a8a8a" /><CategoryName>窗口部件</CategoryName></Category>
      </TemplateList>
      <DialogRight>
        <Preview><PreviewButton>OK</PreviewButton><PreviewButton>Cancel</PreviewButton></Preview>
        <GroupBox>
          <legend>嵌入式设计</legend>
          <Form>
            <FieldLabel>设备：</FieldLabel><Combo $off>无<Chevron color="#a5a5a5" /></Combo>
            <FieldLabel>屏幕大小：</FieldLabel><Combo>默认大小<Chevron color="#444" /></Combo>
          </Form>
        </GroupBox>
      </DialogRight>
    </DialogTop>
    <Rule />
    <CheckRow>
      <svg width="16" height="16" viewBox="0 0 16 16"><rect width="16" height="16" rx="3" fill="#005fb8" /><path d="M4 8.200l2.800 2.600L12 5.500" fill="none" stroke="#fff" strokeWidth="1.200" /></svg>
      <Raised>启动时显示这个对话框</Raised>
    </CheckRow>
    <DialogButtons>
      <PushButton $primary>创建<Latin>(<u>R</u>)</Latin></PushButton>
      <PushButton>打开<Latin>(<u>O</u>)...</Latin></PushButton>
      <PushButton><Gap $s={8} />最近的<Gap $s={16} /><svg width="8" height="4" viewBox="0 0 8 4"><path d="M0 0h8L4 4z" /></svg></PushButton>
      <PushButton>关闭<Latin>(<u>C</u>)</Latin></PushButton>
    </DialogButtons>
  </Dialog>
);

const BitTile = () => (
  <svg width="30" height="30" viewBox="0 0 30 30"><rect width="30" height="30" rx="4" fill="url(#bit)" /><text x="15" y="20" fontSize="15" fontStyle="italic" fontFamily="'Liberation Serif', serif" textAnchor="middle" fill="#fff">Bit</text></svg>
);

const APPS: { icon: React.ReactNode; run?: boolean; active?: boolean }[] = [
  { icon: <svg width="32" height="31" viewBox="0 0 32 31"><circle cx="16" cy="15.500" r="15" fill="url(#edgeB)" /><path d="M1.500 13C3 4.500 9 .5 16 .5c9 0 15 6.500 15 13.500 0 5-4 7.500-8 7.500-3 0-4-1.300-3.500-2.500 1-1.500 1-2.500.5-4C18.500 10 7 7 1.500 13z" fill="url(#edgeA)" /><path d="M11 17c0-4 3-7 7-5 2 1 3 3 2 5.500-.7 1.500-.7 2.500 0 3.500 2 2 6 1.700 9.500.5C26.500 28 20 30.500 16 30c-3-2-5-8-5-13z" fill="#0c4a94" /><path d="M19.500 19c-.7 1.500.3 3.500 3.500 3.500 3 0 5.500-1 7-3.500l-.5 3.500c-3 2-8 2-10.500-.5-1-1-.7-2 .5-3z" fill="#202020" /></svg> },
  { icon: <svg width="30" height="30" viewBox="0 0 30 30"><circle cx="15" cy="15" r="14.500" fill="#fbc116" /><path d="M15 15L2.500 7.700A14.500 14.500 0 0 1 27.600 7.700H15z" fill="#e23b2e" /><path d="M2.500 7.700A14.500 14.500 0 0 0 15 29.500l6.300-11L15 15 8.700 18.600z" fill="#2da94f" /><circle cx="15" cy="15" r="7.200" fill="#fff" /><circle cx="15" cy="15" r="5.600" fill="#3b7ded" /></svg> },
  { icon: <svg width="30" height="30" viewBox="0 0 30 30"><rect width="30" height="30" rx="3" fill="#b9dcfb" /><path d="M8 20c-3-9 0-17 7-17s10 8 7 17z" fill="#33221f" /><path d="M5 30c1-6 5-8 10-8s9 2 10 8z" fill="#f4f4f8" /><path d="M12.500 18h5v5l-2.500 2-2.500-2z" fill="#f3c3ae" /><ellipse cx="15" cy="13.500" rx="5" ry="6.300" fill="#fad9c8" /><path d="M9.500 13c0-5 3-6 5-7 3 1 6 2 6 7 1-7-2-9-5.500-9S8.500 7 9.500 13z" fill="#33221f" /><path d="M11.500 13.500h2M16.500 13.500h2" stroke="#222" /><path d="M14 17.500h2" stroke="#c44" /></svg> },
  { icon: <BitTile /> },
  { icon: <svg width="30" height="30" viewBox="0 0 30 30"><rect x="0" y="0" width="30" height="30" rx="5" fill="#161a18" /><path d="M5.500 8.500h19v11h-17M5.500 8.500v13h17" fill="none" stroke="#25d77c" strokeWidth="2.400" /><path d="M11 12.500h2.500V16H11zM17 12.500h2.500V16H17z" fill="#25d77c" /></svg> },
  { icon: <svg width="30" height="30" viewBox="0 0 30 30"><path d="M22 0L8 13 3 9.500.5 10.800v8.400L3 20.500l5-3.500 14 13 8-3.500v-23z" fill="#1f8ad2" /><path d="M22 8v14L13 15z" fill="#202020" /><path d="M3 9.500L.5 10.800 22 30l.1-8z" fill="#1272b6" /><path d="M22 0l8 3.500v23L22 30z" fill="#33a6ec" /><path d="M3 12.500v5L5.500 15z" fill="#202020" /></svg> },
  { icon: <svg width="27" height="27" viewBox="0 0 27 27"><rect width="27" height="27" rx="5" fill="#323232" /><text x="13.500" y="20.500" fontSize="19" fontWeight="900" fontFamily="Roboto, sans-serif" textAnchor="middle" fill="#fff">H</text></svg> },
  { run: true, icon: <svg width="22" height="28" viewBox="0 0 22 28"><path d="M12 0l6 5 1 9 3 5-4 8-7-1-9-5 3-8 1-7z" fill="url(#gem)" /><path d="M12 0l2 9-3 8 6 10 4-8-3-5-1-9z" fill="#8a68e8" opacity=".8" /><path d="M5 13l5 5 1 8-9-5z" fill="#4b22ab" /></svg> },
  { icon: <svg width="30" height="30" viewBox="0 0 30 30"><rect width="30" height="30" rx="6" fill="#fff" /><path d="M14.500 15.500C13 10 9 6.500 4 7.500c-.5 4.500 2 7.500 7.500 8.500-3.500 1-4.500 4-3.500 7 4 .5 6.500-2.500 6.500-7.500z" fill="#1464e0" /><path d="M15.500 15.500c1.500-5.500 5.500-9 10.500-8 .5 4.500-2 7.500-7.500 8.500 3.500 1 4.500 4 3.500 7-4 .5-6.500-2.500-6.500-7.500z" fill="#1464e0" /><path d="M14.500 16c-4 0-7 2.500-6.500 7 4 .5 6.500-2.500 6.500-7zM15.500 16c4 0 7 2.500 6.500 7-4 .5-6.500-2.500-6.500-7z" fill="#3d94f7" /></svg> },
  { icon: <svg width="30" height="30" viewBox="0 0 30 30"><path d="M0 0h30v30H0z" fill="#6e4c50" /><path d="M0 0h9v30H0z" fill="#51383f" /><path d="M5 6l3-4 4 3h6l4-3 3 5c2 5 1 9-1 11l3 12H4l3-12C4 15 3 10 5 6z" fill="#b18b83" /><ellipse cx="15" cy="12.500" rx="7.500" ry="6" fill="#cfaba0" /><circle cx="12" cy="11.500" r="1.200" fill="#2c1c20" /><circle cx="18.500" cy="11.500" r="1.200" fill="#2c1c20" /><path d="M14 14.500h2.500" stroke="#5c3436" strokeWidth="1.500" /><path d="M8 21h14M7 25h16" stroke="#97716c" /></svg> },
  { run: true, icon: <BitTile /> },
  { run: true, icon: <svg width="31" height="22" viewBox="0 0 31 22"><path d="M1 2h8l2 5M2 2l7 18 6.500-15L22 20l7-18h-9" fill="none" stroke="#ff3a20" strokeWidth="3.400" strokeLinejoin="round" /><path d="M10 2h6l-1 4" fill="none" stroke="#d8200e" strokeWidth="3" /></svg> },
  { run: true, icon: <svg width="31" height="28" viewBox="0 0 31 28"><path d="M0 2c0-1 .8-2 2-2h8l3 4H0z" fill="#e49b0c" /><path d="M0 4h13l2-2h14c1 0 2 1 2 2v22c0 1-1 2-2 2H2c-1 0-2-1-2-2z" fill="url(#gold)" /><path d="M6 28v-6c0-1.500 1-3 3-3h13c2 0 3 1.500 3 3v6z" fill="#1584dc" /><path d="M10.500 23h10" stroke="#0b57a4" strokeWidth="1.600" /></svg> },
  { run: true, active: true, icon: <QtLogo size={26} h={19} /> },
];

const Taskbar = () => (
  <TaskBar>
    <TaskItems>
      <TaskItem>
        <svg width="29" height="29" viewBox="0 0 29 29"><path d="M0 1.500C0 .7.700 0 1.500 0H14v14H0zM15 0h12.500c.8 0 1.500.7 1.500 1.500V14H15zM0 15h14v14H1.500C.7 29 0 28.300 0 27.500zM15 15h14v12.500c0 .8-.7 1.500-1.500 1.500H15z" fill="url(#win)" /></svg>
      </TaskItem>
      <Search>
        <svg width="18" height="18" viewBox="0 0 18 18"><circle cx="7.500" cy="7.500" r="5.800" fill="none" stroke="#fff" strokeWidth="1.700" /><path d="M11.800 11.800l5 5" stroke="#fff" strokeWidth="1.700" /></svg>
        <Raised>搜索</Raised>
      </Search>
      {APPS.map((app, i) => (
        <TaskItem key={i} $active={app.active}>{app.icon}{app.run && <RunMark $active={app.active} />}</TaskItem>
      ))}
    </TaskItems>
    <Tray>
      <Chevron dir="up" color="#fff" s={14} />
      <Gap $s={23} />
      <svg width="20" height="20" viewBox="0 0 20 20"><path d="M18.500 1L1.500 11l8 1 5 7z M18.500 1L9.500 12" fill="none" stroke="#86dcf2" strokeWidth="1.500" strokeLinejoin="round" /></svg>
      <Ime>中</Ime>
      <svg width="21" height="21" viewBox="0 0 21 21"><rect x="1" y="1" width="18.500" height="18.500" rx="3.500" fill="#f4551f" transform="rotate(-7 10 10)" /><text x="10.300" y="16" fontSize="16" fontWeight="bold" fontFamily="Roboto, sans-serif" textAnchor="middle" fill="#fff">S</text></svg>
      <Gap $s={26} />
      <svg width="20" height="16" viewBox="0 0 20 16"><g fill="none" stroke="#fff" strokeWidth="1.500"><path d="M.7 6a13 13 0 0 1 18.600 0M3.500 8.800a9 9 0 0 1 13 0M6.200 11.500a5.300 5.300 0 0 1 7.600 0" /></g><circle cx="10" cy="14" r="1.700" fill="#fff" /></svg>
      <Gap $s={10} />
      <svg width="21" height="18" viewBox="0 0 21 18"><path d="M1 6h3.500L9 2v14l-4.500-4H1z" fill="none" stroke="#fff" strokeWidth="1.400" strokeLinejoin="round" /><path d="M11.500 6a4 4 0 0 1 0 6" fill="none" stroke="#fff" strokeWidth="1.400" /><path d="M14 3.500a8 8 0 0 1 0 11M16.500 1.500a11 11 0 0 1 0 15" fill="none" stroke="#777" strokeWidth="1.300" /></svg>
      <Gap $s={9} />
      <svg width="21" height="18" viewBox="0 0 21 18"><rect x="1" y="4" width="16.500" height="11.500" rx="3" fill="none" stroke="#fff" strokeWidth="1.500" /><rect x="3.500" y="6.500" width="12" height="6.800" rx="1" fill="#fff" /><path d="M19.500 8v4" stroke="#fff" strokeWidth="1.800" /><path d="M4.500 0L0 6.500h3L2 11l5-6.500H4z" fill="#fff" stroke="#202020" strokeWidth=".6" /></svg>
      <Clock>9:08<br />2025/11/7</Clock>
      <svg width="18" height="20" viewBox="0 0 18 20"><path d="M9 2.500C5 2.500 3.500 5.500 3.500 8v4L1.500 15.500h14L14 12v-1" fill="none" stroke="#fff" strokeWidth="1.600" strokeLinejoin="round" /><path d="M6 16.500c.8 2.400 4.700 2.400 5.500 0M7.500 7.500H11L7.500 12H11M13 1.500h4l-4 5h4" fill="none" stroke="#fff" strokeWidth="1.500" /></svg>
    </Tray>
  </TaskBar>
);

const MENUS: [string, number][] = [["文件(F)", 65], ["Edit", 43], ["窗体(O)", 69], ["视图(V)", 68], ["设置(S)", 64], ["窗口(W)", 72], ["帮助(H)", 60]];

export default function App() {
  return (
    <Desktop>
      <Global />
      <Defs />
      <TitleBar>
        <TitleText><QtLogo h={15} />Qt 设计师 - Qt Designer</TitleText>
        <WindowButtons>
          <svg width="13" height="13" viewBox="0 0 13 13"><path d="M.5 6.500h12" stroke="currentColor" /></svg>
          <svg width="13" height="13" viewBox="0 0 13 13"><rect x=".6" y="3" width="9" height="9" rx="1" fill="none" stroke="currentColor" strokeWidth="1.200" /><path d="M3 .7h7c1.500 0 2.300 1 2.300 2.300v7" fill="none" stroke="currentColor" strokeWidth="1.200" /></svg>
          <svg width="13" height="13" viewBox="0 0 13 13"><path d="M.5.5l12 12M12.500.5l-12 12" stroke="currentColor" strokeWidth="1.200" /></svg>
        </WindowButtons>
      </TitleBar>
      <MenuBar>{MENUS.map(([label, w]) => <MenuItem key={label} $w={w}>{label}</MenuItem>)}</MenuBar>
      <ToolBarRow>
        <ToolGroup $w={107} $lead={8}><Grip /><FileTools /></ToolGroup>
        <ToolGroup $w={76} $lead={6}><Grip /><OrderTools /></ToolGroup>
        <ToolGroup $w={138} $lead={7}><Grip /><EditTools /></ToolGroup>
        <ToolGroup $w={280} $lead={8}><Grip /><LayoutTools /></ToolGroup>
      </ToolBarRow>
      <Main>
        <WidgetBox />
        <MdiArea />
        <RightDocks />
      </Main>
      <StatusBar />
      <NewForm />
      <Taskbar />
    </Desktop>
  );
}
